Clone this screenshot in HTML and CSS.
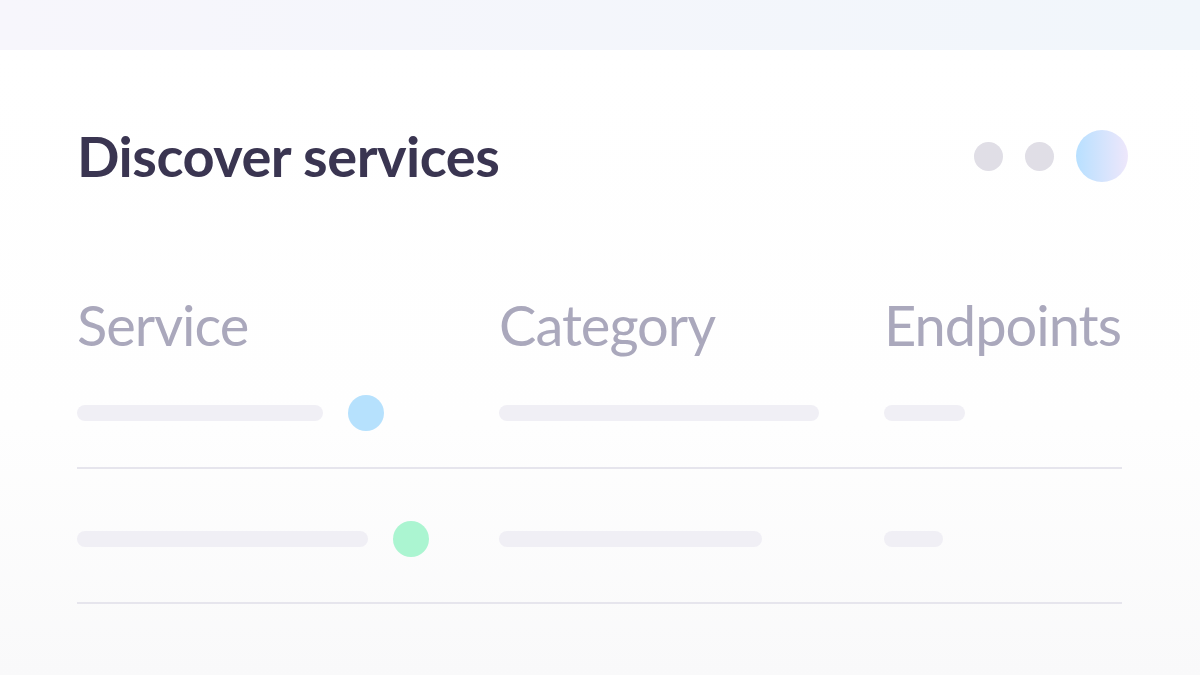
FILE: index.html
```html
<!DOCTYPE html>
<html lang="en">
<head>
    <meta charset="UTF-8">
    <meta name="viewport" content="width=device-width, initial-scale=1.0">
    <title>Discover services</title>
    <link rel="stylesheet" href="styles.css">
</head>
<body>

    <div class="top-band"></div>

    <div class="card">
        <!-- Cabecera de la tarjeta -->
        <div class="card-header">
            <h2>Discover services</h2>
            <div class="dots">
                <span class="dot"></span>
                <span class="dot"></span>
                <span class="dot dot-big"></span>
            </div>
        </div>

        <!-- Tabla de servicios -->
        <div class="table">
            <div class="table-head">
                <div>Service</div>
                <div>Category</div>
                <div>Endpoints</div>
            </div>

            <div class="table-row first">
                <div class="cell">
                    <span class="bar" style="width: 246px"></span>
                    <span class="status blue"></span>
                </div>
                <div class="cell"><span class="bar" style="width: 320px"></span></div>
                <div class="cell"><span class="bar" style="width: 81px"></span></div>
            </div>

            <div class="table-row">
                <div class="cell">
                    <span class="bar" style="width: 291px"></span>
                    <span class="status green"></span>
                </div>
                <div class="cell"><span class="bar" style="width: 263px"></span></div>
                <div class="cell"><span class="bar" style="width: 59px"></span></div>
            </div>
        </div>
    </div>

</body>
</html>
```

FILE: styles.css
```css
body {
    font-family: Lato, "Open Sans", sans-serif;
    margin: 0;
    padding: 0;
    height: 675px;
    overflow: hidden;
    background: #fafafb;
}
.top-band {
    height: 50px;
    background: linear-gradient(90deg, #f7f6fc, #f1f6fb);
}

/* Tarjeta */
.card {
    height: 625px;
    box-sizing: border-box;
    padding: 80px 78px 0 77px;
    background: linear-gradient(180deg, #ffffff 0%, #fefefe 60%, #f9f9fa 100%);
}
.card-header {
    display: flex;
    align-items: center;
    justify-content: space-between;
    height: 52px;
}
.card-header h2 {
    margin: 0;
    font-size: 56px;
    line-height: 52px;
    font-weight: 700;
    color: #3a3551;
    letter-spacing: -0.5px;
}
.dots {
    display: flex;
    align-items: center;
    gap: 22px;
    margin-right: -6px;
}
.dot {
    width: 29px;
    height: 29px;
    border-radius: 50%;
    background-color: #e0dee6;
}
.dot-big {
    width: 52px;
    height: 52px;
    background: linear-gradient(90deg, #b8e0ff, #eee7fb);
}

/* Tabla */
.table {
    margin-top: 111px;
}
.table-head, .table-row {
    display: grid;
    grid-template-columns: 422px 385px 1fr;
}
.table-head {
    font-size: 56px;
    line-height: 64px;
    font-weight: 400;
    letter-spacing: -1px;
    color: #aaa8bc;
    margin-bottom: 38px;
}
.table-row {
    padding: 52px 0 45px 0;
    border-bottom: 2px solid #e6e5ed;
}
.table-row.first {
    padding: 0 0 36px 0;
}
.cell {
    display: flex;
    align-items: center;
    height: 36px;
}
.bar {
    display: block;
    height: 16px;
    border-radius: 8px;
    background-color: #f0eff5;
}
.status {
    width: 36px;
    height: 36px;
    border-radius: 50%;
    margin-left: 25px;
}
.status.blue {
    background-color: #b6e1fd;
}
.status.green {
    background-color: #abf5d1;
}
```
